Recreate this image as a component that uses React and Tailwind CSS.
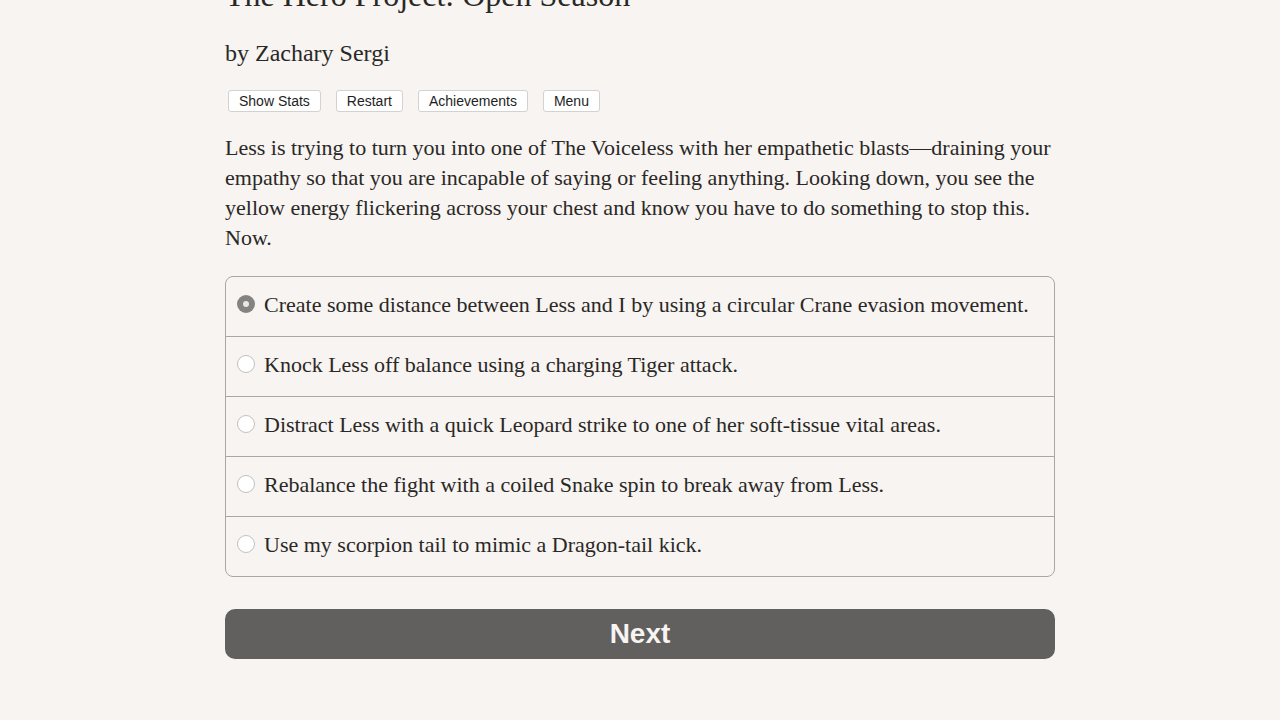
import React from "react";

const choices = [
  "Create some distance between Less and I by using a circular Crane evasion movement.",
  "Knock Less off balance using a charging Tiger attack.",
  "Distract Less with a quick Leopard strike to one of her soft-tissue vital areas.",
  "Rebalance the fight with a coiled Snake spin to break away from Less.",
  "Use my scorpion tail to mimic a Dragon-tail kick.",
];

const paragraph = [
  "Less is trying to turn you into one of The Voiceless with her empathetic blasts\u2014draining your",
  "empathy so that you are incapable of saying or feeling anything. Looking down, you see the",
  "yellow energy flickering across your chest and know you have to do something to stop this.",
  "Now.",
];

const serif = "font-['Liberation_Serif','DejaVu_Serif',serif]";
const sans = "font-['Liberation_Sans',Arial,sans-serif]";

const App = () => {
  return (
    <div className="min-h-[720px] w-full bg-[#f7f4f1] text-[#2a2826] overflow-hidden">
      <div className="w-[830px] ml-[225px]">
        <h1 className={`${serif} text-[32px] leading-[40px] -mt-[25px] whitespace-nowrap`}>
          The Hero Project: Open Season
        </h1>
        <h2 className={`${serif} text-[24px] leading-[30px] mt-[23px]`}>by Zachary Sergi</h2>
        <div className={`${sans} flex gap-[15px] mt-[22px] ml-[3px]`}>
          {["Show Stats", "Restart", "Achievements", "Menu"].map((b) => (
            <button
              key={b}
              className="h-[22px] px-[10px] text-[14px] leading-[20px] bg-white border border-[#d4d2d0] rounded-[3px] text-[#1e1e1e]"
            >
              {b}
            </button>
          ))}
        </div>
        <p className={`${serif} text-[22px] leading-[30px] mt-[21px]`}>
          {paragraph.map((l) => (
            <span key={l} className="block whitespace-nowrap">
              {l}
            </span>
          ))}
        </p>
        <div className="mt-[23px] border border-[#a9a7a5] rounded-[8px]">
          {choices.map((c, i) => (
            <label
              key={c}
              className={`flex items-center pl-[11px] pb-[5px] ${
                i > 0 ? "h-[60px] border-t border-[#a9a7a5]" : "h-[59px]"
              }`}
            >
              {i === 0 ? (
                <span className="w-[18px] h-[18px] rounded-full bg-[#858381] flex items-center justify-center">
                  <span className="w-[6px] h-[6px] rounded-full bg-[#e9e7e5]" />
                </span>
              ) : (
                <span className="w-[18px] h-[18px] rounded-full bg-white border border-[#c3c1bf]" />
              )}
              <span className={`${serif} text-[22px] ml-[9px] whitespace-nowrap`}>{c}</span>
            </label>
          ))}
        </div>
        <button
          className={`${sans} mt-[32px] w-full h-[50px] rounded-[10px] bg-[#61605e] text-[#f7f4f1] text-[28px] font-bold`}
        >
          Next
        </button>
      </div>
    </div>
  );
};

export default App;
